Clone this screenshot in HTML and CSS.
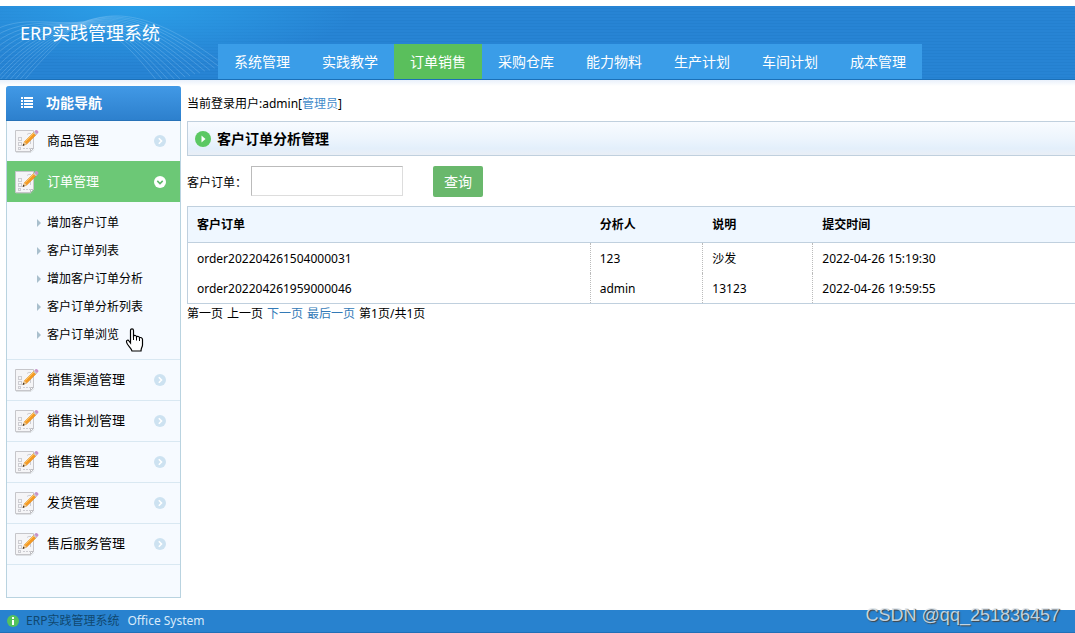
FILE: index.html
```html
<!DOCTYPE html>
<html lang="zh-CN">
<head>
<meta charset="utf-8">
<title>ERP实践管理系统</title>
<link rel="stylesheet" href="styles.css">
</head>
<body>
<svg class="defs" aria-hidden="true">
  <symbol id="note" viewBox="0 0 24 24">
    <path d="M.5 1.500h18v18l-3 3H.5z" fill="#f5f5f7" stroke="#c6c6ca"/>
    <path d="M18.500 19.500h-3v3z" fill="#fff" stroke="#c0c0c4"/>
    <path d="M1 23.500h15l3-3" fill="none" stroke="#bbb" stroke-opacity=".4"/>
    <g fill="none" stroke="#cdcdd2"><rect x="3.500" y="8.500" width="3" height="3"/><rect x="3.500" y="13.500" width="3" height="3"/><rect x="3.500" y="18.500" width="2" height="2"/><path d="M8 19.500h7" stroke-dasharray="2 1"/><path d="M12 5.500a4 4 0 0 1 4-1M15.500 10v5"/></g>
    <path d="M8 16.500l1.500-4L19 3l2.500 2.500-9.700 9.600z" fill="#f59b23" stroke="#d9801b" stroke-width=".5"/>
    <path d="M10.200 12.500 19 3.700" stroke="#ffd47c"/>
    <path d="M8 16.500l1.400-3.700 2.300 2.200z" fill="#e9c999"/>
    <path d="M7.600 17l.8-2.200 1.400 1.300z" fill="#222"/>
    <path d="M18.300 3.700l1.300-1.300 2.600 2.600-1.300 1.300z" fill="#c8ccd2"/>
    <path d="M19.400 2.600l1.300-1.500c1-.8 3.400 1.400 2.700 2.500L22 5.200z" fill="#c693c8"/>
  </symbol>
  <symbol id="right" viewBox="0 0 12 12">
    <circle cx="6" cy="6" r="6" fill="#cde2f1"/><path d="M4.800 3.300 7.500 6 4.800 8.700" fill="none" stroke="#fff" stroke-width="1.600"/>
  </symbol>
  <symbol id="down" viewBox="0 0 12 12">
    <circle cx="6" cy="6" r="6" fill="#fff"/><path d="M3.300 4.900 6 7.600 8.700 4.900" fill="none" stroke="#5cb968" stroke-width="1.500"/>
  </symbol>
</svg>

<header class="header">
  <svg class="waves" viewBox="0 0 240 74" fill="none" stroke="#a4d4f7" stroke-opacity=".28" aria-hidden="true">
    <path d="M-12 27C20 8 50 20 84 16C112 6 150 2 226 60"/>
    <path d="M-12 34C21 11 51 20 83 16C112 7 148 5 221 62"/>
    <path d="M-12 41C22 14 52 20 82 17C112 8 146 7 216 63"/>
    <path d="M-12 48C24 16 53 21 81 17C112 9 144 10 211 65"/>
    <path d="M-12 55C26 18 54 22 80 18C112 10 142 12 206 66"/>
    <path d="M-12 62C28 21 55 23 79 18C112 11 140 15 201 68"/>
    <path d="M-12 69C30 24 56 24 78 19C112 12 138 17 196 69"/>
    <path d="M-9 73C32 27 57 25 77 19C112 13 136 20 191 71"/>
    <path d="M-5 74C34 30 58 26 76 20C112 14 134 22 186 72"/>
    <path d="M-1 74C36 33 59 27 75 20C112 15 132 25 181 74"/>
    <path d="M4 74C38 36 60 28 74 21C112 16 130 27 176 75"/>
    <path d="M9 74C40 39 61 29 73 21C112 17 128 30 171 77"/>
    <path d="M14 74C42 42 62 30 72 22C112 18 126 32 166 78"/>
    <path d="M19 74C44 45 63 31 71 22C110 19 124 35 161 80"/>
    <path d="M24 74C46 48 62 34 70 24"/>
  </svg>
  <h1 class="brand">ERP实践管理系统</h1>
  <nav class="topnav">
    <a href="#">系统管理</a>
    <a href="#">实践教学</a>
    <a href="#" class="active">订单销售</a>
    <a href="#">采购仓库</a>
    <a href="#">能力物料</a>
    <a href="#">生产计划</a>
    <a href="#">车间计划</a>
    <a href="#">成本管理</a>
  </nav>
</header>

<div class="layout">
  <aside class="sidebar">
    <h2 class="side-title">
      <svg width="12" height="12" viewBox="0 0 12 12" fill="#fff" aria-hidden="true"><path d="M0 0h2v2H0zM3 0h9v2H3zM0 3h2v2H0zM3 3h9v2H3zM0 6h2v2H0zM3 6h9v2H3zM0 9h2v2H0zM3 9h9v2H3z"/></svg>
      功能导航
    </h2>
    <a href="#" class="group"><svg class="note"><use href="#note"/></svg><span>商品管理</span><svg class="arrow"><use href="#right"/></svg></a>
    <a href="#" class="group open"><svg class="note"><use href="#note"/></svg><span>订单管理</span><svg class="arrow"><use href="#down"/></svg></a>
    <ul class="submenu">
      <li><a href="#">增加客户订单</a></li>
      <li><a href="#">客户订单列表</a></li>
      <li><a href="#">增加客户订单分析</a></li>
      <li><a href="#">客户订单分析列表</a></li>
      <li><a href="#">客户订单浏览</a>
        <svg class="cursor" viewBox="0 0 18 24" aria-hidden="true"><path d="M5 15V2.500C5 .2 8 .2 8 2.500V8c1-1 3-.6 3 .8 1-.8 3-.4 3 1 1-.6 3-.2 3 1.700V17c0 2-1.500 3-1.500 6H6.500C6 20 1.500 17.500 1 14c-.3-2 1.700-2.400 2.500-1z" fill="#fff" stroke="#000" stroke-width="1.200"/><path d="M8 7.500V12M11 9v3.500M14 10v3" stroke="#000" fill="none"/></svg>
      </li>
    </ul>
    <a href="#" class="group"><svg class="note"><use href="#note"/></svg><span>销售渠道管理</span><svg class="arrow"><use href="#right"/></svg></a>
    <a href="#" class="group"><svg class="note"><use href="#note"/></svg><span>销售计划管理</span><svg class="arrow"><use href="#right"/></svg></a>
    <a href="#" class="group"><svg class="note"><use href="#note"/></svg><span>销售管理</span><svg class="arrow"><use href="#right"/></svg></a>
    <a href="#" class="group"><svg class="note"><use href="#note"/></svg><span>发货管理</span><svg class="arrow"><use href="#right"/></svg></a>
    <a href="#" class="group"><svg class="note"><use href="#note"/></svg><span>售后服务管理</span><svg class="arrow"><use href="#right"/></svg></a>
  </aside>

  <main class="main">
    <p class="user">当前登录用户:admin[<a href="#">管理员</a>]</p>
    <h2 class="title">
      <svg width="16" height="16" viewBox="0 0 16 16" aria-hidden="true"><circle cx="8" cy="8" r="8" fill="#5bc863"/><path d="M6.500 4.500 10.500 8l-4 3.500z" fill="#fff"/></svg>
      客户订单分析管理
    </h2>
    <form class="search">
      <label for="order">客户订单<span class="colon">：</span></label>
      <input id="order" type="text">
      <button type="button">查询</button>
    </form>
    <table class="orders">
      <thead>
        <tr><th class="c-order">客户订单</th><th class="c-person">分析人</th><th class="c-note">说明</th><th>提交时间</th></tr>
      </thead>
      <tbody>
        <tr><td>order202204261504000031</td><td>123</td><td>沙发</td><td>2022-04-26 15:19:30</td></tr>
        <tr><td>order202204261959000046</td><td>admin</td><td>13123</td><td>2022-04-26 19:59:55</td></tr>
      </tbody>
    </table>
    <div class="pager"><span>第一页</span><span>上一页</span><a href="#">下一页</a><a href="#">最后一页</a><span>第1页/共1页</span></div>
  </main>
</div>

<footer class="footer">
  <svg width="12" height="12" viewBox="0 0 12 12" aria-hidden="true"><circle cx="6" cy="6" r="6" fill="#55c25d"/><path d="M5 2h2v2H5zM5 5h2v5H5z" fill="#fff"/></svg>
  <span class="system">ERP实践管理系统</span>
  <span class="office">Office System</span>
  <span class="watermark">CSDN @qq_251836457</span>
</footer>
</body>
</html>
```
FILE: styles.css
```css
* { box-sizing: border-box; }

body {
  display: flex;
  flex-direction: column;
  min-height: 100vh;
  margin: 0;
  padding-top: 6px;
  background: #fff;
  color: #000;
  font: 12px/18px "Noto Sans", "Noto Sans CJK SC", sans-serif;
}

a { color: #337ab7; text-decoration: none; }
h1, h2, p, ul { margin: 0; padding: 0; }
.defs { position: absolute; width: 0; height: 0; }

.header {
  position: relative;
  display: flex;
  align-items: flex-end;
  height: 74px;
  border-bottom: 1px solid #1b70b8;
  background:
    radial-gradient(ellipse 230px 60px at 130px 0, #2b9fe8, rgba(43, 159, 232, 0)),
    repeating-linear-gradient(#2784d4 0 2px, #2480cf 2px 3px);
}
.waves { position: absolute; left: 0; top: 0; width: 240px; height: 73px; }
.brand {
  position: relative;
  align-self: flex-start;
  width: 218px;
  padding: 14px 0 0 20px;
  color: #fff;
  font-size: 18px;
  font-weight: 400;
  line-height: 26px;
}
.topnav { position: relative; display: flex; background: #3a9de8; }
.topnav a {
  width: 88px;
  color: #fff;
  font-size: 14px;
  line-height: 35px;
  text-align: center;
}
.topnav .active { background: #5abf5c; }

.layout {
  flex: 1;
  display: flex;
  gap: 6px;
  padding: 6px 0 12px 6px;
  background: linear-gradient(#e9f0fb, #fff 6px);
}

.sidebar {
  flex: none;
  width: 175px;
  border: solid #b9d3e0;
  border-width: 0 1px 1px;
  border-radius: 3px 3px 0 0;
  background: #f6faff;
}
.side-title {
  display: flex;
  align-items: center;
  gap: 13px;
  height: 35px;
  margin: 0 -1px;
  padding-left: 15px;
  border-bottom: 1px solid #2772b8;
  border-radius: 3px 3px 0 0;
  background: linear-gradient(#4199e6, #2d80cd);
  color: #fff;
  font-size: 14px;
}
.group {
  display: flex;
  align-items: center;
  height: 41px;
  padding: 0 14px 0 8px;
  border-bottom: 1px solid #d9e8f2;
  color: #000;
  font-size: 13px;
}
.group span { padding-bottom: 2px; }
.side-title + .group { height: 40px; border: 0; }
.group.open { border: 0; background: #6cc876; color: #fff; }
.note { width: 24px; height: 24px; margin-right: 8px; }
.arrow { width: 12px; height: 12px; margin-left: auto; }

.submenu {
  padding: 7px 0 10px;
  border-bottom: 1px solid #d9e8f2;
  list-style: none;
}
.submenu li { position: relative; display: flex; align-items: center; height: 28px; padding-left: 30px; }
.submenu li::before {
  content: "";
  margin-right: 6px;
  border: solid transparent;
  border-width: 4px 0 4px 4px;
  border-left-color: #a9bfcd;
}
.submenu a { color: #000; }
.cursor { position: absolute; left: 118px; top: 7px; width: 19px; height: 24px; }

.main { flex: 1; min-width: 0; }
.user { padding: 9px 0 8px; }
.user a { color: #428bca; }
.title {
  display: flex;
  align-items: center;
  gap: 6px;
  height: 35px;
  padding-left: 7px;
  border: solid #c0d0de;
  border-width: 1px 0 1px 1px;
  background: linear-gradient(#f8fbff, #edf5fd 50%, #e3effb 80%, #eaeff6);
  font-size: 14px;
}
.search { display: flex; align-items: center; height: 50px; }
.search label { width: 64px; padding-top: 2px; }
.colon { font-family: "Noto Sans CJK TC", sans-serif; }
.search input {
  width: 152px;
  height: 30px;
  padding: 0 6px;
  border: 1px solid;
  border-color: #bbb #ddd #ddd #bbb;
  background: #fff;
  font: inherit;
}
.search button {
  width: 50px;
  height: 31px;
  margin-left: 30px;
  padding: 2px 0 0;
  border: 0;
  border-radius: 2px;
  background: #69b86c;
  color: #fff;
  font: inherit;
  font-size: 14px;
}

.orders {
  width: 100%;
  border-collapse: separate;
  border-spacing: 0;
  border: solid #c0d0de;
  border-width: 1px 0 1px 1px;
  table-layout: fixed;
}
.orders th {
  height: 36px;
  padding: 0 9px;
  border-bottom: 1px solid #c0d0de;
  background: #eff7ff;
  text-align: left;
}
.orders td { height: 30px; padding: 2px 9px 0; border-right: 1px dotted #bbb; }
.orders td:last-child { border-right: 0; }
.c-order { width: 45.4%; }
.c-person { width: 12.7%; }
.c-note { width: 12.4%; }

.pager { display: flex; gap: 4px; padding-top: 1px; }

.footer {
  position: relative;
  display: flex;
  align-items: center;
  height: 23px;
  padding-left: 7px;
  border-bottom: 1px solid #1f70b8;
  background: #2882cf;
}
.system { margin: 0 8px 0 7px; color: #10486f; }
.office { color: #d8eafa; }
.watermark {
  position: absolute;
  right: 15px;
  bottom: 6px;
  color: rgba(222, 230, 236, .85);
  font: 18px/22px "Liberation Sans", Arial, sans-serif;
  text-shadow: 1px 1px 1px #444;
}
```
